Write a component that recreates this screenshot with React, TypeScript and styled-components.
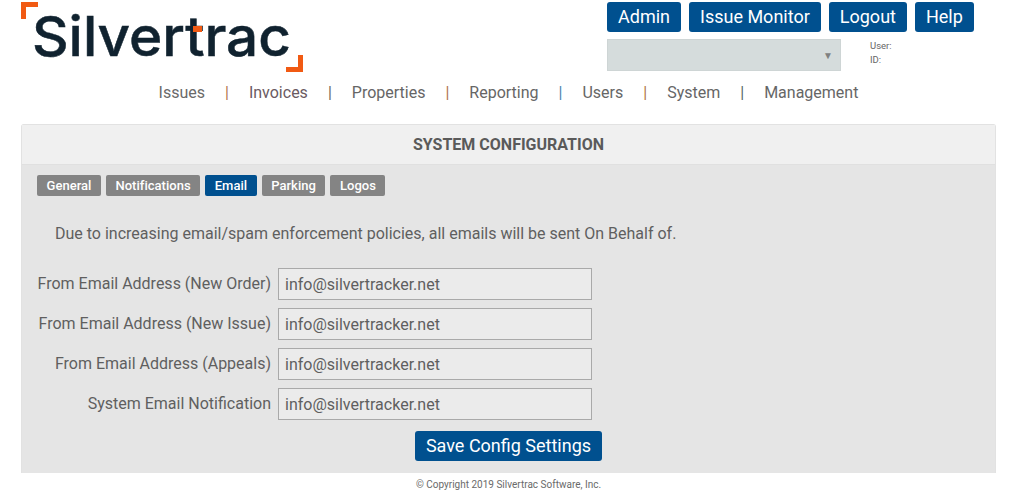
import { Fragment } from "react";
import styled, { createGlobalStyle } from "styled-components";

const GlobalStyle = createGlobalStyle`
  html, body {
    margin: 0;
    padding: 0;
    background: #fff;
    font-family: Roboto, "Liberation Sans", sans-serif;
    color: #5f5f5f;
  }
`;

const Page = styled.div`
  width: 1028px;
  height: 501px;
  overflow: hidden;
  box-sizing: border-box;
  padding: 2px 32px 0 21px;
`;

const Header = styled.header`
  display: flex;
  justify-content: space-between;
  height: 70px;
`;

const LogoSvg = styled.svg`
  display: block;
  width: 283px;
  height: 70px;
`;

const Account = styled.div`
  width: 366px;
  margin-right: 23px;
  display: flex;
  flex-direction: column;
  gap: 7px;
`;

const TopButtons = styled.div`
  display: flex;
  gap: 8px;
`;

const Button = styled.button`
  height: 30px;
  padding: 0 11px;
  border: 0;
  border-radius: 3px;
  background: #00508f;
  color: #fff;
  white-space: nowrap;
  font: 400 18px/30px Roboto, sans-serif;
`;

const SelectRow = styled.div`
  display: flex;
  align-items: flex-start;
  gap: 29px;
`;

const FakeSelect = styled.div`
  width: 234px;
  height: 32px;
  box-sizing: border-box;
  border: 1px solid #ced5d5;
  background: #d5dcdc;
  display: flex;
  align-items: center;
  justify-content: flex-end;
  padding-right: 7px;
  color: #808080;
  font-size: 10px;
`;

const UserInfo = styled.div`
  font-size: 9.5px;
  line-height: 14px;
  color: #666;
`;

const Nav = styled.nav`
  height: 52px;
  display: flex;
  justify-content: center;
  align-items: flex-start;
  padding-top: 11px;
  box-sizing: border-box;
  gap: 20px;
  font-size: 16px;
  line-height: 19px;
`;

const NavLink = styled.span<{ $tint: string }>`
  color: ${(p) => p.$tint};
`;

const NavBar = styled.span<{ $tint: string }>`
  color: ${(p) => p.$tint};
`;

const Panel = styled.section`
  height: 349px;
  box-sizing: border-box;
  border: 1px solid #e2e2e2;
  border-bottom: 0;
  border-radius: 3px 3px 0 0;
  background: #e5e5e5;
  display: flex;
  flex-direction: column;
`;

const PanelTitle = styled.h1`
  margin: 0;
  height: 40px;
  box-sizing: border-box;
  background: #f0f0f0;
  border-bottom: 1px solid #e0e0e0;
  text-align: center;
  font: 700 16px/40px Roboto, sans-serif;
  color: #5a5a5a;
`;

const Tabs = styled.div`
  display: flex;
  gap: 5px;
  padding: 10px 0 0 15px;
`;

const Tab = styled.span<{ $active?: boolean }>`
  height: 21px;
  padding: 0 9.5px;
  border-radius: 2px;
  background: ${(p) => (p.$active ? "#00508f" : "#848484")};
  color: #fff;
  letter-spacing: 0.03px;
  font: 500 13px/21px Roboto, sans-serif;
`;

const Intro = styled.p`
  margin: 28px 0 0 33px;
  font-size: 16px;
  line-height: 19px;
`;

const Form = styled.div`
  margin-top: 25px;
  display: flex;
  flex-direction: column;
  gap: 8px;
`;

const Row = styled.div`
  display: flex;
  align-items: flex-start;
  gap: 7px;
`;

const Label = styled.label`
  width: 249px;
  text-align: right;
  font-size: 16px;
  line-height: 31px;
`;

const Input = styled.div`
  width: 314px;
  height: 32px;
  box-sizing: border-box;
  border: 1px solid #a9a9a9;
  background: #ebebeb;
  padding-left: 6px;
  font-size: 16px;
  line-height: 31px;
  color: #5f5f5f;
`;

const SaveRow = styled.div`
  margin-top: 11px;
  display: flex;
  justify-content: center;
`;

const Footer = styled.footer`
  margin-top: 6px;
  text-align: center;
  font-size: 10px;
  line-height: 12px;
  color: #6a6a6a;
`;

const NAV = [
  { name: "Issues", tint: "#6a6a6a", bar: "#b0764c" },
  { name: "Invoices", tint: "#6a5a62", bar: "#6a6a5a" },
  { name: "Properties", tint: "#666", bar: "#b0764c" },
  { name: "Reporting", tint: "#666", bar: "#4c86b0" },
  { name: "Users", tint: "#666", bar: "#b0764c" },
  { name: "System", tint: "#666", bar: "#5a6a6a" },
  { name: "Management", tint: "#666", bar: "" },
];

const TABS = ["General", "Notifications", "Email", "Parking", "Logos"];

const FIELDS = [
  "From Email Address (New Order)",
  "From Email Address (New Issue)",
  "From Email Address (Appeals)",
  "System Email Notification",
];

const Logo = () => (
  <LogoSvg viewBox="0 0 283 70">
    <path d="M0 17V0h17v5H5v12z" fill="#f15a13" />
    <path d="M282 53v17h-17v-5h12V53z" fill="#f15a13" />
    <text
      x="11"
      y="54"
      fontFamily="Inter, sans-serif"
      fontSize="55"
      fontWeight="500"
      fill="#10222f"
      stroke="#10222f"
      strokeWidth="0.5"
      textLength="259"
      lengthAdjust="spacingAndGlyphs"
    >
      Silvertrac
    </text>
    <rect x="172" y="24" width="9" height="6" fill="#f15a13" />
  </LogoSvg>
);

export default function App() {
  return (
    <Page>
      <GlobalStyle />
      <Header>
        <Logo />
        <Account>
          <TopButtons>
            <Button>Admin</Button>
            <Button>Issue Monitor</Button>
            <Button>Logout</Button>
            <Button>Help</Button>
          </TopButtons>
          <SelectRow>
            <FakeSelect>▼</FakeSelect>
            <UserInfo>
              User:
              <br />
              ID:
            </UserInfo>
          </SelectRow>
        </Account>
      </Header>
      <Nav>
        {NAV.map(({ name, tint, bar }) => (
          <Fragment key={name}>
            <NavLink $tint={tint}>{name}</NavLink>
            {bar && <NavBar $tint={bar}>|</NavBar>}
          </Fragment>
        ))}
      </Nav>
      <Panel>
        <PanelTitle>SYSTEM CONFIGURATION</PanelTitle>
        <Tabs>
          {TABS.map((t) => (
            <Tab key={t} $active={t === "Email"}>
              {t}
            </Tab>
          ))}
        </Tabs>
        <Intro>Due to increasing email/spam enforcement policies, all emails will be sent On Behalf of.</Intro>
        <Form>
          {FIELDS.map((f) => (
            <Row key={f}>
              <Label>{f}</Label>
              <Input>info@silvertracker.net</Input>
            </Row>
          ))}
        </Form>
        <SaveRow>
          <Button>Save Config Settings</Button>
        </SaveRow>
      </Panel>
      <Footer>© Copyright 2019 Silvertrac Software, Inc.</Footer>
    </Page>
  );
}
